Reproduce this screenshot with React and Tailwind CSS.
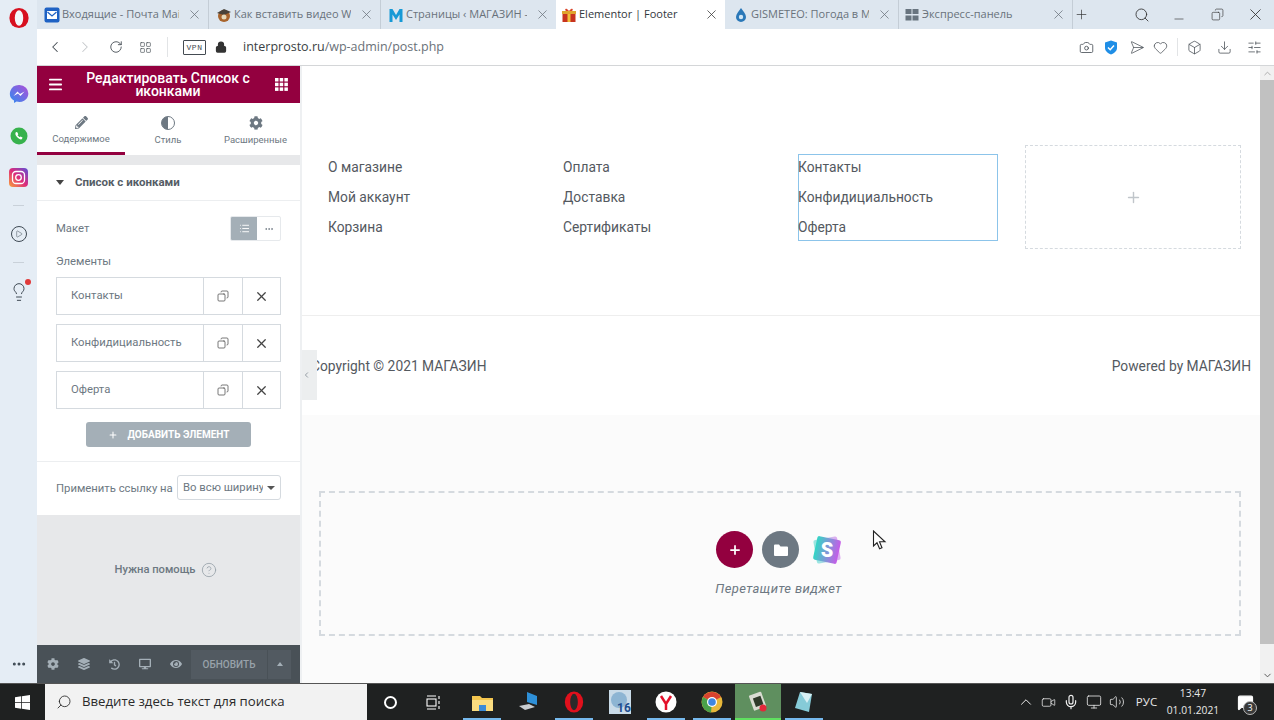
import React from "react";
import { Menu, X, Copy, Plus, ChevronLeft, ChevronRight, RotateCw, LayoutGrid, Lock, Camera, Send, Heart, Box, Download, SlidersHorizontal, Search, Minus, List, MoreHorizontal, ChevronUp, ChevronDown, CircleHelp, Monitor, Play, Lightbulb, Mic, Volume2, Video, MessageSquare } from "lucide-react";
import { FaCog, FaPencilAlt, FaLayerGroup, FaHistory, FaDesktop, FaEye } from "react-icons/fa";

const Opera = ({ s = 20 }) => (
  <svg width={s} height={s} viewBox="0 0 24 24"><ellipse cx="12" cy="12" rx="10.5" ry="11" fill="#d7101f" /><ellipse cx="12" cy="12" rx="4.6" ry="8.4" fill="#f3f6fa" /></svg>
);
const OperaTask = () => (
  <svg width="22" height="24" viewBox="0 0 24 24"><ellipse cx="12" cy="12" rx="10" ry="11.5" fill="#e0101c" /><ellipse cx="12" cy="12" rx="4.2" ry="9" fill="#2a2a2a" /></svg>
);

const tabs = [
  { w: "w-[172px]", pl: "pl-[6px]", t: "Входящие - Почта Mail", icon: <svg width="16" height="16" viewBox="0 0 16 16"><rect x="0.5" y="0.5" width="15" height="15" rx="2" fill="#1f62c4" /><rect x="3" y="4" width="10" height="8" fill="#fff" /><path d="M3.5 5l4.5 4 4.5-4" stroke="#1f62c4" strokeWidth="1.2" fill="none" /></svg> },
  { w: "w-[172px]", pl: "pl-[6px]", t: "Как вставить видео We", icon: <svg width="16" height="16" viewBox="0 0 16 16"><circle cx="8" cy="9" r="6" fill="#a8642c" /><path d="M1 6l7-4 7 3-7 3z" fill="#4a4238" /><circle cx="8" cy="10" r="2.5" fill="#e8d9b8" /></svg> },
  { w: "w-[175px]", pl: "pl-[6px]", none: true, t: "Страницы ‹ МАГАЗИН -", icon: <svg width="16" height="16" viewBox="0 0 16 16"><path d="M1.5 15V2h3l3.5 6 3.5-6h3v13h-3V7.5L8 13 4.5 7.5V15z" fill="#1699d6" /></svg> },
  { w: "w-[169px]", pl: "pl-[4px]", t: "Elementor | Footer", active: true, icon: <svg width="16" height="16" viewBox="0 0 16 16"><rect x="1.5" y="5" width="13" height="10" fill="#c8331e" /><rect x="6.5" y="5" width="3" height="10" fill="#f0c23c" /><rect x="1" y="4" width="14" height="3" fill="#e0a52c" /><path d="M8 4C5 0 3 2 5 4zM8 4c3-4 5-2 3 0z" fill="#d9442a" /></svg> },
  { w: "w-[174px]", pl: "pl-[7px]", t: "GISMETEO: Погода в М", icon: <svg width="14" height="16" viewBox="0 0 14 16"><path d="M7 1c2 3 5 6 5 9a5 5 0 0 1-10 0c0-3 3-6 5-9z" fill="#2a78b8" /><circle cx="7" cy="10" r="2.2" fill="#cfe6f5" /></svg> },
  { w: "w-[174px]", pl: "pl-[4px]", t: "Экспресс-панель", icon: <svg width="14" height="14" viewBox="0 0 14 14" fill="#68747f"><rect x="0.5" y="1" width="6" height="5" /><rect x="7.5" y="1" width="6" height="5" /><rect x="0.5" y="7.5" width="6" height="5" /><rect x="7.5" y="7.5" width="6" height="5" /></svg> },
];

function BrowserTab({ tab }) {
  return (
    <div className={`${tab.w} ${tab.pl} h-full flex items-center pr-[6px] gap-[2px] ${tab.active ? "bg-white" : tab.none ? "" : "border-r border-[#c4cdd6]"}`}>
      <span className="w-[17px] shrink-0 flex justify-center">{tab.icon}</span>
      <span className={`flex-1 min-w-0 mr-[6px] overflow-hidden whitespace-nowrap text-[11px] ${tab.active ? "text-[#33383d]" : "text-[#69727b]"}`}>{tab.t}</span>
      <X size={15} strokeWidth={1.2} className={`shrink-0 ${tab.active ? "text-[#333]" : "text-[#68707a]"}`} />
    </div>
  );
}

function Slot({ w, children }) {
  return <div className={`${w} h-full flex items-center justify-center shrink-0`}>{children}</div>;
}

function AddressBar() {
  return (
    <div className="h-[37px] bg-white border-b border-[#d4d6d8] flex items-center text-[#444b52] shrink-0">
      <Slot w="w-[36px]"><ChevronLeft size={18} strokeWidth={1.4} /></Slot>
      <Slot w="w-[24px]"><ChevronRight size={18} strokeWidth={1.4} className="text-[#c5c8cc]" /></Slot>
      <Slot w="w-[38px]"><RotateCw size={14} strokeWidth={1.5} /></Slot>
      <Slot w="w-[21px]"><LayoutGrid size={13} strokeWidth={1.2} /></Slot>
      <div className="w-[1px] h-[20px] bg-[#e2e4e6] ml-[11px]" />
      <div className="ml-[15px] w-[23px] h-[15px] border border-[#444b52] rounded-[1px] text-[8px] leading-[13px] text-center tracking-[0.5px] font-['Liberation_Mono',monospace]">VPN</div>
      <Lock size={12} strokeWidth={2.5} className="ml-[9px] text-[#333] fill-[#333]" />
      <div className="ml-[16px] text-[12.5px] text-[#6a7178]"><span className="text-[#3a3f44]">interprosto.ru</span>/wp-admin/post.php</div>
      <div className="flex-1" />
      <Slot w="w-[25px]"><Camera size={15} strokeWidth={1.3} /></Slot>
      <Slot w="w-[24px]"><svg width="14" height="15" viewBox="0 0 14 15"><path d="M7 .5l6 2v5.5c0 3-3 5.5-6 6.5-3-1-6-3.5-6-6.5V2.5z" fill="#1f8ee6" /><path d="M4 7.5l2.2 2.2L10 5.5" stroke="#fff" strokeWidth="1.5" fill="none" /></svg></Slot>
      <Slot w="w-[25px]"><Send size={15} strokeWidth={1.1} className="rotate-45 -ml-[2px]" /></Slot>
      <Slot w="w-[24px]"><Heart size={15} strokeWidth={1.2} /></Slot>
      <div className="w-[1px] h-[18px] bg-[#e2e4e6] mx-[5px]" />
      <Slot w="w-[22px]"><Box size={15} strokeWidth={1.2} /></Slot>
      <Slot w="w-[38px]"><Download size={15} strokeWidth={1.2} /></Slot>
      <Slot w="w-[23px]"><SlidersHorizontal size={15} strokeWidth={1.2} /></Slot>
      <div className="w-[8px]" />
    </div>
  );
}

function LeftRail() {
  return (
    <div className="w-[37px] shrink-0 h-full bg-[#e5edf5] flex flex-col items-center text-[#3f4a54]">
      <div className="mt-[7px]"><Opera s={22} /></div>
      <div className="mt-[55px]"><svg width="20" height="20" viewBox="0 0 20 20"><defs><linearGradient id="ms" x1="0" y1="1" x2="1" y2="0"><stop offset="0" stopColor="#2e8cf0" /><stop offset="1" stopColor="#b04ed8" /></linearGradient></defs><path d="M10 1a9 8.5 0 0 0-5 15.6V19l2.6-1.4A9 8.5 0 1 0 10 1z" fill="url(#ms)" /><path d="M4.5 12l4-4.5 2.5 2.5 4.5-2.5-4 4.5-2.5-2.5z" fill="#fff" /></svg></div>
      <div className="mt-[23px]"><svg width="18" height="18" viewBox="0 0 18 18"><circle cx="9" cy="9" r="8.5" fill="#37b24d" /><path d="M6 5c-1 1-1 3 1 5s4 3 5 2l.5-1.5-2-1-1 .8-2-2 .8-1-1-2z" fill="#fff" /></svg></div>
      <div className="mt-[23px]"><svg width="19" height="19" viewBox="0 0 19 19"><defs><linearGradient id="ig" x1="0" y1="1" x2="1" y2="0"><stop offset="0" stopColor="#f9a13a" /><stop offset="0.5" stopColor="#dd2a7b" /><stop offset="1" stopColor="#5b51d8" /></linearGradient></defs><rect width="19" height="19" rx="4" fill="url(#ig)" /><rect x="3.5" y="3.5" width="12" height="12" rx="3.5" stroke="#fff" strokeWidth="1.3" fill="none" /><circle cx="9.5" cy="9.5" r="2.8" stroke="#fff" strokeWidth="1.3" fill="none" /></svg></div>
      <div className="mt-[18px] w-[11px] h-[1px] bg-[#c9d1d9]" />
      <div className="mt-[20px] w-[16px] h-[16px] rounded-full border-[1.5px] border-[#3f4a54] flex items-center justify-center"><Play size={8} strokeWidth={1.5} /></div>
      <div className="mt-[20px] w-[11px] h-[1px] bg-[#c9d1d9]" />
      <div className="mt-[19px] relative">
        <Lightbulb size={20} strokeWidth={1.2} />
        <div className="absolute top-[-3px] right-[-2px] w-[6px] h-[6px] rounded-full bg-[#e03a3a]" />
      </div>
      <div className="flex-1" />
      <MoreHorizontal size={16} strokeWidth={2.5} className="mb-[11px]" />
    </div>
  );
}

function RepeaterRow({ label }) {
  return (
    <div className="h-[38px] border border-[#d5dadf] flex items-center text-[11.3px] text-[#6d7882]">
      <div className="flex-1 pl-[14px]">{label}</div>
      <div className="w-[39px] h-full border-l border-[#d5dadf] flex items-center justify-center"><Copy size={12} strokeWidth={1.6} className="text-[#555] -scale-x-100" /></div>
      <div className="w-[38px] h-full border-l border-[#d5dadf] flex items-center justify-center"><X size={15} strokeWidth={2} className="text-[#444]" /></div>
    </div>
  );
}

function Panel() {
  return (
    <div className="w-[263px] shrink-0 h-full bg-[#e7e8ea] flex flex-col font-['Roboto',sans-serif]">
      <div className="h-[37px] bg-[#93003f] flex items-center text-white shrink-0">
        <div className="w-[37px] flex justify-center"><Menu size={17} strokeWidth={2.5} /></div>
        <div className="flex-1 text-center text-[14px] font-medium leading-[13px]">Редактировать Список с иконками</div>
        <div className="w-[38px] flex justify-center"><svg width="13" height="13" viewBox="0 0 13 13" fill="#fff"><rect width="3.5" height="3.5" /><rect x="4.7" width="3.5" height="3.5" /><rect x="9.4" width="3.5" height="3.5" /><rect y="4.7" width="3.5" height="3.5" /><rect x="4.7" y="4.7" width="3.5" height="3.5" /><rect x="9.4" y="4.7" width="3.5" height="3.5" /><rect y="9.4" width="3.5" height="3.5" /><rect x="4.7" y="9.4" width="3.5" height="3.5" /><rect x="9.4" y="9.4" width="3.5" height="3.5" /></svg></div>
      </div>
      <div className="h-[52px] bg-white flex text-[9.5px] text-[#6d7882] shrink-0">
        <div className="w-[88px] border-b-[3px] border-[#93003f] flex flex-col items-center pt-[13px] gap-[3px]">
          <FaPencilAlt size={13} />
          <span>Содержимое</span>
        </div>
        <div className="w-[86px] flex flex-col items-center pt-[13px] gap-[3px]">
          <div className="w-[14px] h-[14px] rounded-full border-[1.5px] border-[#6d7882] bg-[linear-gradient(90deg,#6d7882_50%,#fff_50%)]" />
          <span>Стиль</span>
        </div>
        <div className="flex-1 flex flex-col items-center pt-[13px] gap-[3px]">
          <FaCog size={14} />
          <span>Расширенные</span>
        </div>
      </div>
      <div className="h-[10px] shrink-0" />
      <div className="bg-white h-[350px] shrink-0 flex flex-col">
        <div className="h-[36px] border-b border-[#eceef0] flex items-center pl-[19px] text-[11.5px] font-bold text-[#555d66] shrink-0">
          <svg width="8" height="5" viewBox="0 0 8 5" className="mr-[11px]"><path d="M0 0h8L4 5z" fill="#444" /></svg>
          Список с иконками
        </div>
        <div className="px-[19px] pt-[15px]">
          <div className="flex items-center justify-between h-[25px] text-[11.3px] text-[#6d7882]">
            <span className="pt-[2px]">Макет</span>
            <div className="flex h-[25px] w-[51px] rounded-[2px] border border-[#e6e9ec] overflow-hidden">
              <div className="w-[26px] bg-[#a4afb7] flex items-center justify-center"><List size={11} className="text-white" /></div>
              <div className="flex-1 flex items-center justify-center"><MoreHorizontal size={10} className="text-[#6d7882]" /></div>
            </div>
          </div>
          <div className="mt-[14px] text-[11.3px] text-[#6d7882] h-[13px] leading-[13px]">Элементы</div>
          <div className="mt-[9px] flex flex-col gap-[9px]">
            <RepeaterRow label="Контакты" />
            <RepeaterRow label="Конфидициальность" />
            <RepeaterRow label="Оферта" />
          </div>
          <div className="mt-[13px] mx-auto w-[165px] h-[25px] bg-[#a4afb7] rounded-[3px] text-white flex items-center justify-center text-[10px] font-bold gap-[10px]">
            <Plus size={10} strokeWidth={2.5} />
            ДОБАВИТЬ ЭЛЕМЕНТ
          </div>
        </div>
        <div className="mt-[14px] border-t border-[#eceef0] px-[19px] pt-[13px] flex items-center justify-between text-[11.3px] text-[#6d7882]">
          <span className="pt-[3px]">Применить ссылку на</span>
          <div className="w-[104px] h-[25px] border border-[#d5dadf] rounded-[3px] flex items-center pl-[5px] pr-[5px]">
            <span className="flex-1 overflow-hidden whitespace-nowrap pt-[2px]">Во всю ширину</span>
            <svg width="8" height="4" viewBox="0 0 8 4" className="ml-[4px] shrink-0"><path d="M0 0h8L4 4z" fill="#555" /></svg>
          </div>
        </div>
      </div>
      <div className="flex-1 flex items-center justify-center gap-[5px] text-[11.2px] font-medium text-[#6d7882] pb-[20px] pr-[6px]">
        Нужна помощь <CircleHelp size={16} strokeWidth={1.3} className="text-[#9aa3ab]" />
      </div>
      <div className="h-[38px] bg-[#495157] flex items-center text-[#a4afb7] shrink-0">
        <Slot w="w-[31px]"><FaCog size={12} /></Slot>
        <Slot w="w-[31px]"><FaLayerGroup size={12} /></Slot>
        <Slot w="w-[30px]"><FaHistory size={11} /></Slot>
        <Slot w="w-[31px]"><FaDesktop size={12} /></Slot>
        <Slot w="w-[31px]"><FaEye size={12} /></Slot>
        <div className="h-[29px] w-[76px] bg-[#525a61] flex items-center justify-center text-[10px] font-medium text-[#98a2aa]">ОБНОВИТЬ</div>
        <div className="ml-[1px] h-[29px] w-[23px] bg-[#525a61] flex items-center justify-center"><svg width="6" height="4" viewBox="0 0 6 4"><path d="M0 4h6L3 0z" fill="#a4afb7" /></svg></div>
      </div>
    </div>
  );
}

const FooterColumn = ({ items, className = "" }) => (
  <div className={`flex flex-col ${className}`}>
    {items.map((i) => <div key={i} className="h-[30px] leading-[30px]">{i}</div>)}
  </div>
);

function Canvas() {
  return (
    <div className="flex-1 min-w-0 h-full relative bg-[#fbfbfb] font-['Roboto',sans-serif] text-[13.8px] text-[#54595f] border-l-2 border-[#eef0f2]">
      <div className="bg-white h-[349px] flex flex-col">
        <div className="h-[250px] border-b border-[#eeeeee] pt-[79px] pl-[26px] flex items-start">
          <FooterColumn items={["О магазине", "Мой аккаунт", "Корзина"]} className="w-[235px] pt-[7px]" />
          <FooterColumn items={["Оплата", "Доставка", "Сертификаты"]} className="w-[235px] pt-[7px]" />
          <div className="w-[200px] h-[87px] border border-[#8cc4ea] mt-[9px]">
            <FooterColumn items={["Контакты", "Конфидициальность", "Оферта"]} className="-mt-[3px] -ml-[1px]" />
          </div>
          <div className="ml-[27px] w-[216px] h-[104px] border border-dashed border-[#d5dadf] flex items-center justify-center"><Plus size={17} strokeWidth={2} className="text-[#c0c5ca]" /></div>
        </div>
        <div className="flex-1 flex items-center justify-between pl-[9px] pr-[9px] pt-[1px]">
          <span>Copyright © 2021 МАГАЗИН</span>
          <span>Powered by МАГАЗИН</span>
        </div>
      </div>
      <div className="mt-[76px] ml-[17px] w-[922px] h-[145px] border-2 border-dashed border-[#d5dadf] flex flex-col items-center pt-[38px]">
        <div className="flex items-center gap-[9px] ml-[1px]">
          <div className="w-[37px] h-[37px] rounded-full bg-[#93003f] flex items-center justify-center"><Plus size={14} strokeWidth={3} className="text-white" /></div>
          <div className="w-[37px] h-[37px] rounded-full bg-[#6d7882] flex items-center justify-center"><svg width="14" height="12" viewBox="0 0 14 12"><path d="M0 1.5A1 1 0 0 1 1 .5h4l1.5 2H13a1 1 0 0 1 1 1V11a1 1 0 0 1-1 1H1a1 1 0 0 1-1-1z" fill="#fff" /></svg></div>
          <div className="w-[37px] h-[37px] flex items-center justify-center"><svg width="36" height="36" viewBox="0 0 36 36"><defs><linearGradient id="sk" x1="0" y1="0.5" x2="1" y2="0.5"><stop offset="0" stopColor="#33d6c5" /><stop offset="1" stopColor="#c65be8" /></linearGradient></defs><rect x="6" y="6" width="24" height="24" rx="2" transform="rotate(-10 18 18)" fill="url(#sk)" opacity="0.5" /><rect x="6" y="6" width="24" height="24" rx="2" transform="rotate(12 18 18)" fill="url(#sk)" /><text x="18" y="25" textAnchor="middle" fontSize="20" fontWeight="900" fontFamily="Roboto" fill="#fff">S</text></svg></div>
        </div>
        <div className="mt-[11px] text-[13px] tracking-[0.4px] italic text-[#6d7882] -ml-[3px]">Перетащите виджет</div>
      </div>
      <div className="absolute left-0 top-[284px] w-[15px] h-[50px] bg-[#eceeef] flex items-center justify-center pr-[6px]"><ChevronLeft size={10} strokeWidth={1.8} className="text-[#6d7882]" /></div>
      <svg width="16" height="22" viewBox="0 0 16 22" className="absolute left-[570px] top-[464px]"><path d="M1.5 1v15l3.5-3.2 2.6 6 2.4-1-2.5-6H13z" fill="#fff" stroke="#222" strokeWidth="1.1" /></svg>
    </div>
  );
}

function Scrollbar() {
  return (
    <div className="w-[14px] shrink-0 h-full bg-[#f1f1f1] flex flex-col items-center">
      <ChevronUp size={11} className="text-[#a8a8a8] mt-[2px] shrink-0" />
      <div className="w-full h-[564px] mt-[1px] bg-[#c1c1c1]" />
      <div className="flex-1" />
      <ChevronDown size={11} className="text-[#505050] mb-[2px] shrink-0" />
    </div>
  );
}

function TaskIcon({ children, on, active }) {
  return (
    <div className={`w-[46px] h-full relative flex items-center justify-center shrink-0 ${active ? "bg-[#5f8f5f]" : ""}`}>
      {children}
      {on && <div className={`absolute bottom-0 h-[2px] ${active ? "bg-[#5fe05f] left-0 right-0" : "bg-[#76b9ed] left-[4px] right-[4px]"}`} />}
    </div>
  );
}

function Taskbar() {
  return (
    <div className="h-[37px] bg-[#1f2121] flex items-center text-white font-['Open_Sans',sans-serif] shrink-0 border-t border-[#555]">
      <div className="w-[45px] flex justify-center"><svg width="15" height="15" viewBox="0 0 16 16" fill="#fff"><path d="M0 2.3l6.5-.9v6.2H0zM7.3 1.3L16 0v7.6H7.3zM0 8.4h6.5v6.2L0 13.7zM7.3 8.4H16V16l-8.7-1.3z" /></svg></div>
      <div className="w-[322px] h-full bg-[#f2f2f2] flex items-center pl-[11px] text-[#2a2a2a] text-[13.2px]">
        <Search size={16} strokeWidth={1.3} className="-scale-x-100 mr-[10px]" />
        Введите здесь текст для поиска
      </div>
      <div className="w-[46px] flex justify-center"><div className="w-[13px] h-[13px] rounded-full border-2 border-white" /></div>
      <div className="w-[42px] mr-[4px] flex justify-center"><svg width="16" height="15" viewBox="0 0 16 15" fill="none" stroke="#fff" strokeWidth="1.1"><path d="M1 1h9M1 14h9" /><rect x="1" y="4" width="9" height="7" /><path d="M13 1v3M13 6v3M13 11v3" /></svg></div>
      <TaskIcon on><svg width="21" height="17" viewBox="0 0 21 17"><path d="M0 2h8l2 2h11v13H0z" fill="#f4c64f" /><rect x="0" y="6" width="21" height="11" fill="#fadc80" /><rect x="7" y="11" width="7" height="6" fill="#3a8ad8" /></svg></TaskIcon>
      <TaskIcon><svg width="22" height="20" viewBox="0 0 22 20"><path d="M10 0l10 4v9l-10-3z" fill="#2e90d8" /><path d="M2 14l10-2 6 3-10 3z" fill="#c8ccd0" /></svg></TaskIcon>
      <TaskIcon on><OperaTask /></TaskIcon>
      <TaskIcon><svg width="22" height="24" viewBox="0 0 22 24"><rect x="0" y="0" width="22" height="24" fill="#c9dbe8" /><circle cx="10" cy="10" r="8" fill="#8db5d3" /><text x="8" y="22" fontSize="12" fontWeight="700" fontFamily="Roboto" fill="#1f4f8f">16</text></svg></TaskIcon>
      <TaskIcon on><svg width="22" height="22" viewBox="0 0 22 22"><circle cx="11" cy="11" r="10.5" fill="#fff" /><path d="M6 5l5 8 5-8M11 13v6" stroke="#e3102a" strokeWidth="2.5" fill="none" /></svg></TaskIcon>
      <TaskIcon on><svg width="22" height="22" viewBox="0 0 22 22"><circle cx="11" cy="11" r="10.5" fill="#e8b83a" /><path d="M11 11L2 6a10.5 10.5 0 0 1 18 0z" fill="#d8432f" /><path d="M11 11l-9-5a10.5 10.5 0 0 0 8 15.5z" fill="#4aa04a" /><circle cx="11" cy="11" r="5" fill="#fff" /><circle cx="11" cy="11" r="3.8" fill="#3f86e0" /></svg></TaskIcon>
      <TaskIcon on active><svg width="20" height="22" viewBox="0 0 20 22"><rect x="3" y="2" width="13" height="16" rx="1" transform="rotate(-20 10 10)" fill="#d9dcd2" /><rect x="6" y="6" width="8" height="9" transform="rotate(-20 10 10)" fill="#2f3a2a" /><circle cx="15" cy="17" r="3.5" fill="#e2283a" /></svg></TaskIcon>
      <TaskIcon on><svg width="20" height="22" viewBox="0 0 20 22"><path d="M6 1l12 2-3 18L1 17z" fill="#86cbd8" /><path d="M6 1l12 2-5 9z" fill="#d8f0f4" /></svg></TaskIcon>
      <div className="flex-1" />
      <div className="flex items-center text-[#f0f0f0] h-full">
        <Slot w="w-[23px]"><ChevronUp size={18} strokeWidth={1.3} /></Slot>
        <Slot w="w-[23px]"><Video size={15} strokeWidth={1.2} /></Slot>
        <Slot w="w-[22px]"><Mic size={16} strokeWidth={1.8} /></Slot>
        <Slot w="w-[24px]"><Monitor size={16} strokeWidth={1.2} /></Slot>
        <Slot w="w-[22px]"><Volume2 size={16} strokeWidth={1.2} /></Slot>
      </div>
      <div className="w-[37px] text-center text-[11.5px] text-[#e8e8e8]">РУС</div>
      <div className="w-[56px] text-center text-[10.3px] leading-[17px] text-[#e8e8e8]"><div>13:47</div><div>01.01.2021</div></div>
      <div className="w-[53px] h-full relative flex items-center justify-center">
        <MessageSquare size={17} strokeWidth={1.5} className="fill-white -ml-[5px]" />
        <div className="absolute left-[22px] top-[17px] w-[14px] h-[14px] rounded-full bg-[#3a3a3a] border border-[#bbb] text-[9px] leading-[12px] text-center">3</div>
      </div>
    </div>
  );
}

export default function App() {
  return (
    <div className="w-[1274px] h-[720px] overflow-hidden flex flex-col font-['Open_Sans',sans-serif] bg-white">
      <div className="flex flex-1 min-h-0">
        <LeftRail />
        <div className="flex-1 min-w-0 flex flex-col">
          <div className="h-[29px] bg-[#dde6ef] flex items-center shrink-0">
            {tabs.map((t) => <BrowserTab key={t.t} tab={t} />)}
            <Slot w="w-[16px]"><Plus size={15} strokeWidth={1.1} className="text-[#333] shrink-0" /></Slot>
            <div className="flex-1" />
            <Slot w="w-[38px]"><Search size={16} strokeWidth={1.3} className="text-[#333] ml-[2px]" /></Slot>
            <Slot w="w-[38px]"><Minus size={14} strokeWidth={1.1} className="text-[#333] mt-[8px]" /></Slot>
            <Slot w="w-[38px]"><Copy size={13} strokeWidth={1.2} className="text-[#333] -scale-x-100" /></Slot>
            <Slot w="w-[38px]"><X size={19} strokeWidth={1.1} className="text-[#333]" /></Slot>
          </div>
          <AddressBar />
          <div className="flex-1 min-h-0 flex">
            <Panel />
            <Canvas />
            <Scrollbar />
          </div>
        </div>
      </div>
      <Taskbar />
    </div>
  );
}
